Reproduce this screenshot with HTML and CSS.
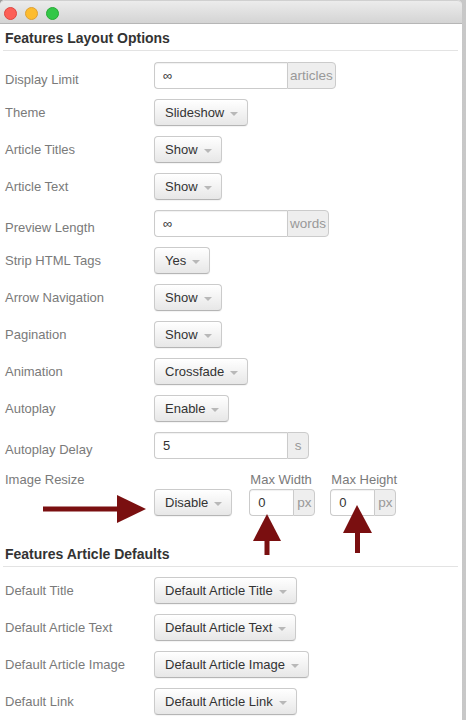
FILE: index.html
```html
<!DOCTYPE html>
<html>
<head>
<meta charset="utf-8">
<link rel="stylesheet" href="styles.css">
</head>
<body>
<div class="window">
  <div class="titlebar">
    <span class="light light--close"></span>
    <span class="light light--min"></span>
    <span class="light light--max"></span>
  </div>
  <div class="panel">
    <h2 class="section-title">Features Layout Options</h2>

    <div class="row row--input">
      <span class="row-label">Display Limit</span>
      <div class="input-group"><span class="field">∞</span><span class="addon">articles</span></div>
    </div>
    <div class="row">
      <span class="row-label">Theme</span>
      <span class="dropdown">Slideshow<span class="caret"></span></span>
    </div>
    <div class="row">
      <span class="row-label">Article Titles</span>
      <span class="dropdown">Show<span class="caret"></span></span>
    </div>
    <div class="row">
      <span class="row-label">Article Text</span>
      <span class="dropdown">Show<span class="caret"></span></span>
    </div>
    <div class="row row--input">
      <span class="row-label">Preview Length</span>
      <div class="input-group"><span class="field">∞</span><span class="addon">words</span></div>
    </div>
    <div class="row">
      <span class="row-label">Strip HTML Tags</span>
      <span class="dropdown">Yes<span class="caret"></span></span>
    </div>
    <div class="row">
      <span class="row-label">Arrow Navigation</span>
      <span class="dropdown">Show<span class="caret"></span></span>
    </div>
    <div class="row">
      <span class="row-label">Pagination</span>
      <span class="dropdown">Show<span class="caret"></span></span>
    </div>
    <div class="row">
      <span class="row-label">Animation</span>
      <span class="dropdown">Crossfade<span class="caret"></span></span>
    </div>
    <div class="row">
      <span class="row-label">Autoplay</span>
      <span class="dropdown">Enable<span class="caret"></span></span>
    </div>
    <div class="row row--input">
      <span class="row-label">Autoplay Delay</span>
      <div class="input-group"><span class="field">5</span><span class="addon addon--unit">s</span></div>
    </div>

    <div class="resize">
      <span class="row-label row-label--top">Image Resize</span>
      <div class="resize-controls">
        <span class="dropdown resize-toggle">Disable<span class="caret"></span></span>
        <div class="sub sub--width">
          <span class="sub-label">Max Width</span>
          <div class="input-group input-group--small"><span class="field">0</span><span class="addon addon--unit">px</span></div>
        </div>
        <div class="sub">
          <span class="sub-label">Max Height</span>
          <div class="input-group input-group--small"><span class="field">0</span><span class="addon addon--unit">px</span></div>
        </div>
      </div>
    </div>

    <h2 class="section-title section-title--second">Features Article Defaults</h2>

    <div class="row">
      <span class="row-label">Default Title</span>
      <span class="dropdown">Default Article Title<span class="caret"></span></span>
    </div>
    <div class="row">
      <span class="row-label">Default Article Text</span>
      <span class="dropdown">Default Article Text<span class="caret"></span></span>
    </div>
    <div class="row">
      <span class="row-label">Default Article Image</span>
      <span class="dropdown">Default Article Image<span class="caret"></span></span>
    </div>
    <div class="row">
      <span class="row-label">Default Link</span>
      <span class="dropdown">Default Article Link<span class="caret"></span></span>
    </div>
  </div>

  <svg class="annotations" width="466" height="720" viewBox="0 0 466 720" aria-hidden="true">
    <g fill="#7a0f10">
      <rect x="43" y="506.5" width="76" height="5"/>
      <polygon points="117,495 146,509 117,523"/>
      <polygon points="267,514 253,541 281,541"/>
      <rect x="264.5" y="539" width="5" height="16"/>
      <polygon points="357,505 343,533 372,533"/>
      <rect x="355" y="531" width="5" height="22"/>
    </g>
  </svg>
</div>
</body>
</html>
```

FILE: styles.css
```css
html, body {
  margin: 0;
  padding: 0;
}
body {
  width: 466px;
  height: 720px;
  overflow: hidden;
  background: linear-gradient(to right, #9c9c9c, #c8c8c8);
  font-family: "Liberation Sans", Arial, Helvetica, sans-serif;
}
.window {
  position: relative;
  width: 462px;
  height: 720px;
  background: #fff;
  border-radius: 5px 5px 0 0;
}
.titlebar {
  height: 23px;
  border-bottom: 1px solid #b6b6b6;
  border-top: 1px solid #d0d0d0;
  box-sizing: border-box;
  height: 24px;
  border-radius: 5px 5px 0 0;
  background: linear-gradient(#ececec, #d4d4d4);
  display: flex;
  align-items: center;
  padding-left: 4px;
  gap: 8px;
}
.light {
  width: 11px;
  height: 11px;
  border-radius: 50%;
  border: 0.5px solid transparent;
  margin-top: 2px;
}
.light--close { background: #fc5f57; border-color: #de4640; }
.light--min { background: #fdbc2e; border-color: #dea033; }
.light--max { background: #33c748; border-color: #27aa35; }

.panel {
  padding-left: 5px;
}
.section-title {
  margin: 5px 4px 11px -2px;
  padding: 0 0 3px 2px;
  font-size: 14px;
  line-height: 18px;
  font-weight: bold;
  color: #333;
  border-bottom: 1px solid #e3e3e3;
}
.section-title--second {
  margin-top: 29px;
  margin-bottom: 10px;
}
.row {
  display: flex;
  align-items: flex-start;
  height: 27px;
  margin-bottom: 10px;
}
.row-label {
  width: 149px;
  flex: none;
  font-size: 13px;
  line-height: 27px;
  color: #7a7a7a;
}
.row--input .row-label {
  padding-top: 8px;
  line-height: 19px;
}
.row-label--top {
  line-height: 18px;
}
.dropdown {
  display: inline-flex;
  align-items: center;
  box-sizing: border-box;
  height: 27px;
  padding: 0 9px 0 10px;
  border: 1px solid #cbcbcb;
  border-bottom-color: #b5b5b5;
  border-radius: 4px;
  background: linear-gradient(#ffffff, #e7e7e7);
  box-shadow: inset 0 1px 0 rgba(255,255,255,0.6), 0 1px 1px rgba(0,0,0,0.05);
  font-size: 13px;
  color: #333;
  white-space: nowrap;
}
.caret {
  width: 0;
  height: 0;
  margin-left: 6px;
  margin-top: 2px;
  border-left: 4px solid transparent;
  border-right: 4px solid transparent;
  border-top: 4px solid #b8b8b8;
}
.input-group {
  display: inline-flex;
  height: 27px;
  box-sizing: border-box;
}
.field {
  box-sizing: border-box;
  width: 133px;
  height: 27px;
  padding-left: 8px;
  border: 1px solid #cbcbcb;
  border-right: none;
  border-radius: 4px 0 0 4px;
  box-shadow: inset 0 1px 1px rgba(0,0,0,0.06);
  font-size: 13px;
  line-height: 25px;
  color: #333;
}
.addon {
  box-sizing: border-box;
  height: 27px;
  min-width: 22px;
  padding: 0 2px;
  border: 1px solid #cbcbcb;
  border-radius: 0 4px 4px 0;
  background: #eeeeee;
  font-size: 13.5px;
  line-height: 25px;
  color: #999;
  text-align: center;
}
.addon--unit {
  padding: 0 3px;
}
.input-group--small .field {
  width: 44px;
}
.input-group--small .addon {
  width: 22px;
  padding: 0;
}

.resize {
  display: flex;
  align-items: flex-start;
  padding-top: 2px;
}
.resize-controls {
  display: flex;
  align-items: flex-end;
}
.resize-toggle {
  margin-right: 17px;
  margin-bottom: 0;
}
.sub {
  display: flex;
  flex-direction: column;
}
.sub--width {
  margin-right: 15px;
}
.sub-label {
  font-size: 13px;
  line-height: 18px;
  color: #7a7a7a;
  padding-left: 1px;
}
.annotations {
  position: absolute;
  left: 0;
  top: 0;
  pointer-events: none;
}
```
